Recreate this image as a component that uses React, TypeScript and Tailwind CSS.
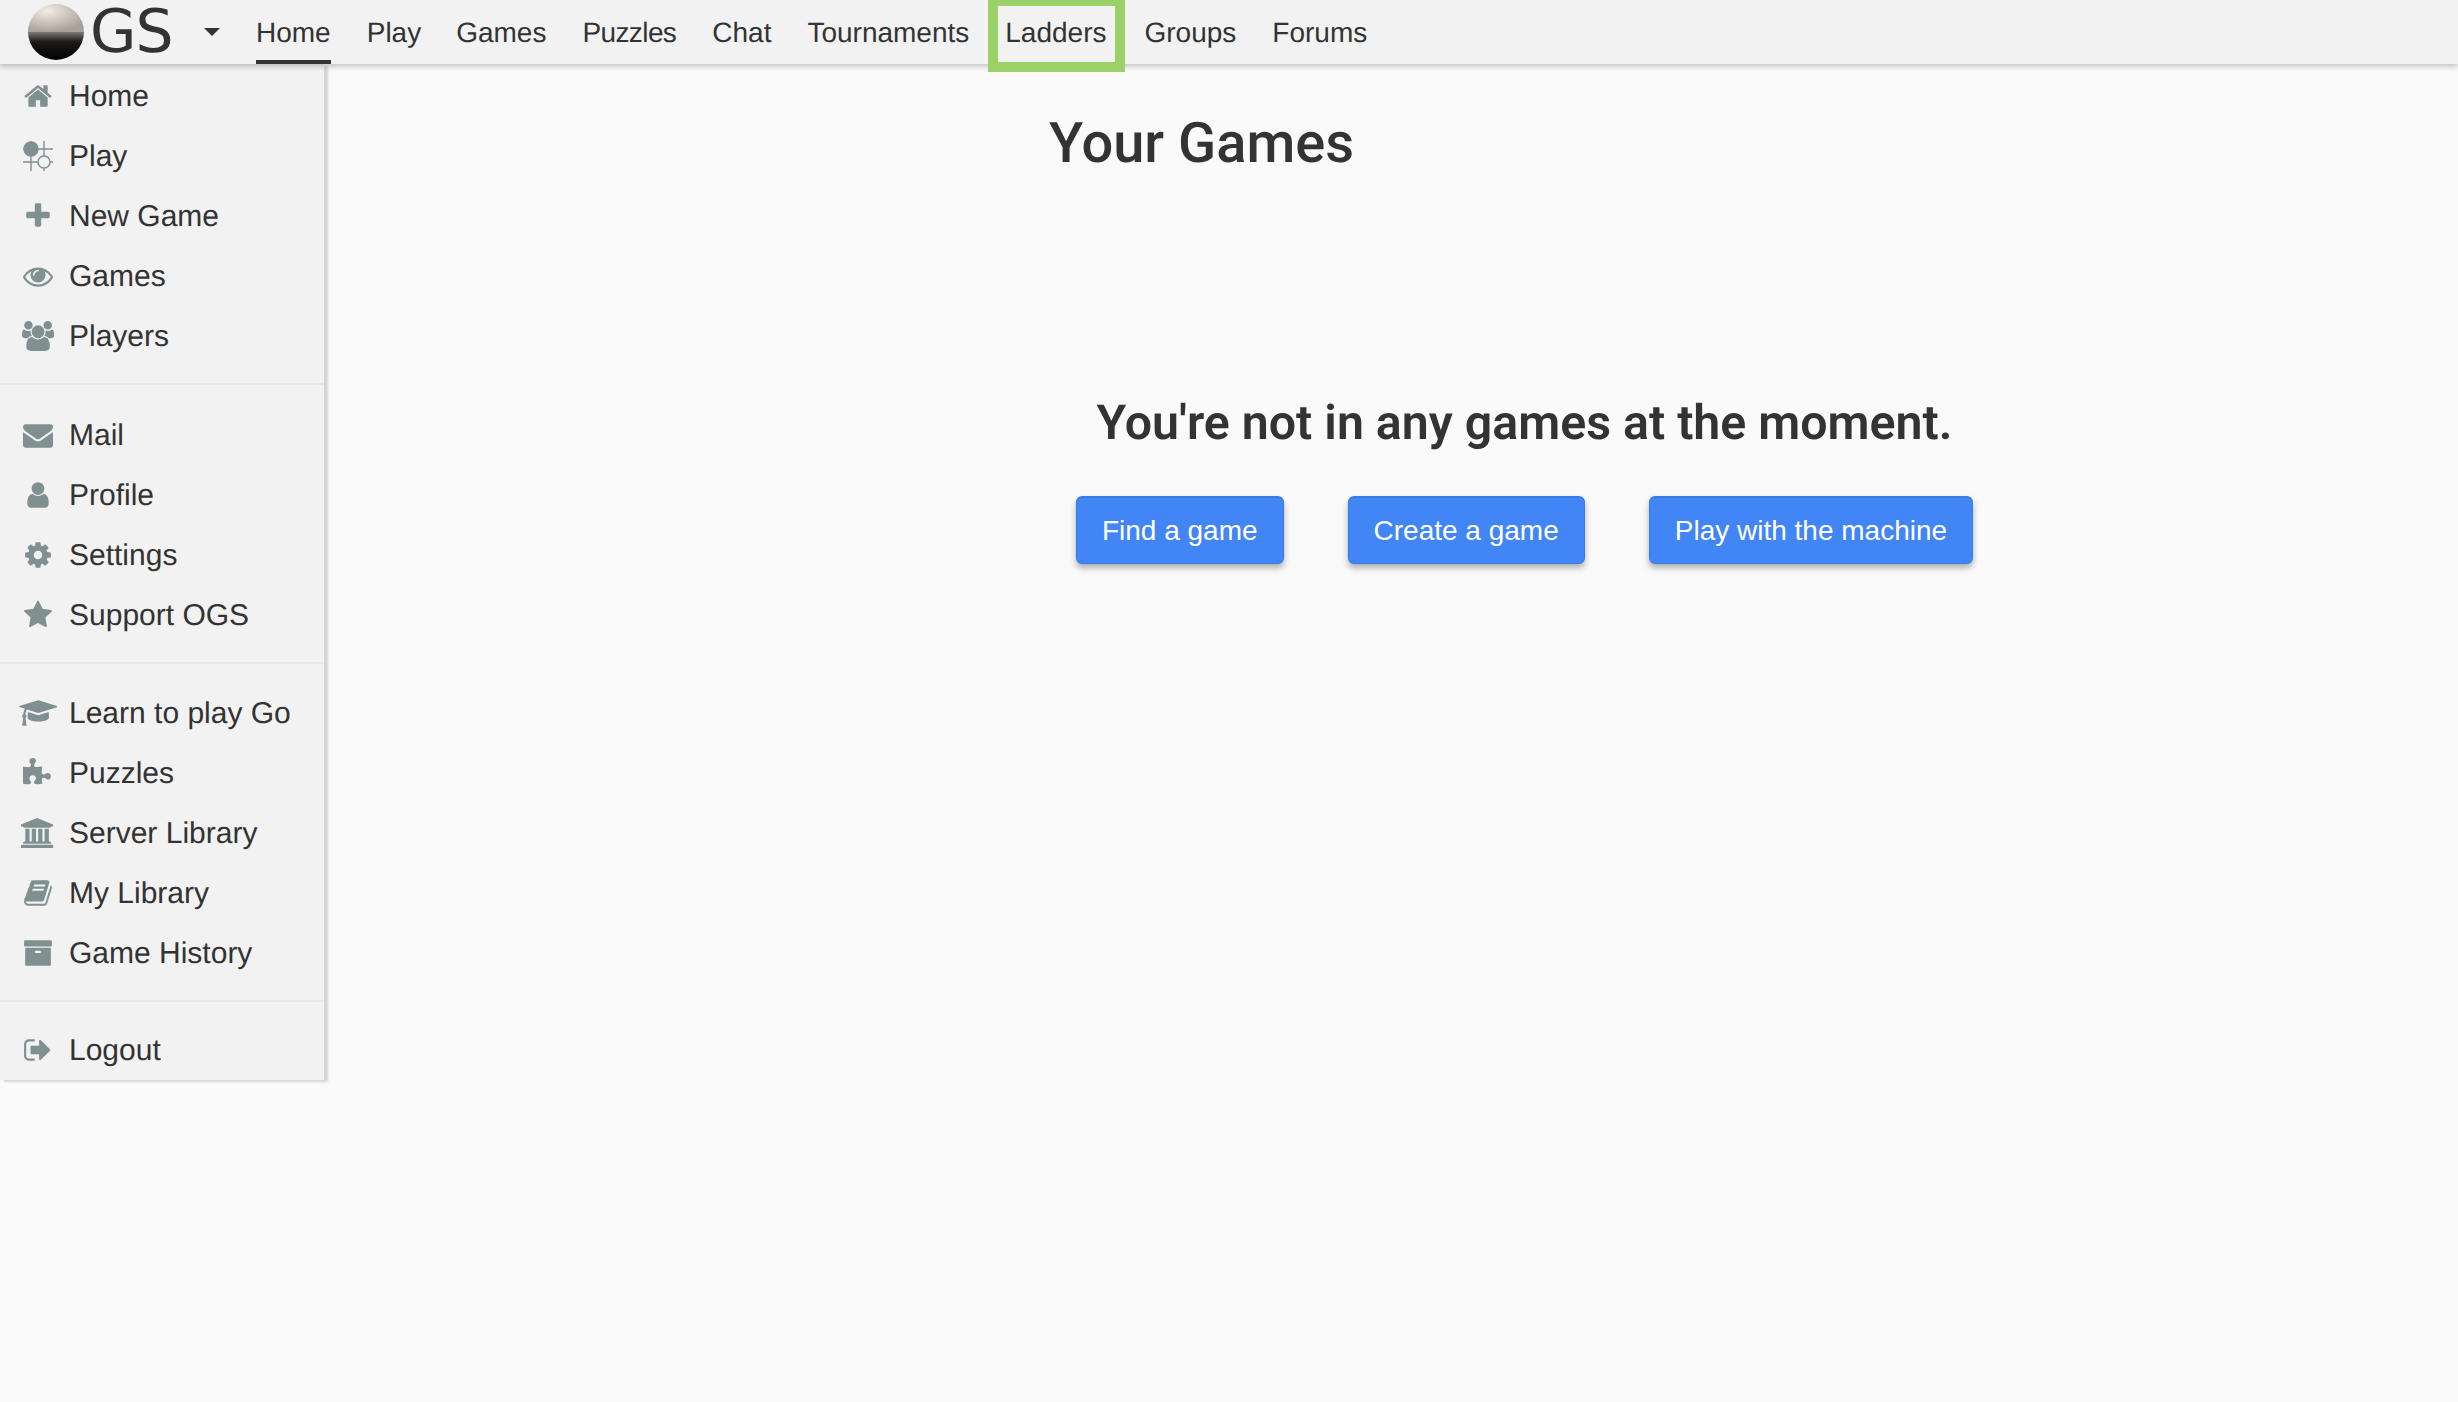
import type { ReactNode } from "react";

// font-awesome 4 glyphs, the 5.x ones in react-icons are too different
const Fa = ({ d, w = 1792, h = 1792 }: { d: string; w?: number; h?: number }) => (
  <svg viewBox={`0 0 ${w} ${h}`} style={{ width: (w * 30) / 1792, height: (h * 30) / 1792 }} fill="currentColor">
    <path d={d} />
  </svg>
);

const GoIcon = () => (
  <svg viewBox="0 0 30 30" className="w-[30px] h-[30px]" fill="none" stroke="currentColor" strokeWidth="1.4">
    <path d="M0 8h30M21 0v15M0 21h30M8 0v30M21 14v16" />
    <circle cx="8" cy="8" r="7" fill="currentColor" />
    <circle cx="21" cy="21" r="6" fill="#f2f2f2" />
  </svg>
);

const Logo = () => (
  <svg viewBox="0 0 56 56" className="w-[56px] h-[56px] shrink-0">
    <defs>
      <radialGradient id="top" cx="35%" cy="25%" r="75%">
        <stop offset="0%" stopColor="#f4ebe2" />
        <stop offset="100%" stopColor="#a9a199" />
      </radialGradient>
      <linearGradient id="bottom" x1="0" y1="0" x2="0" y2="1">
        <stop offset="0%" stopColor="#7d7a76" />
        <stop offset="35%" stopColor="#1c1b1a" />
        <stop offset="100%" stopColor="#000000" />
      </linearGradient>
    </defs>
    <path d="M0 28a28 28 0 0 1 56 0z" fill="url(#top)" />
    <path d="M0 28a28 28 0 0 0 56 0z" fill="url(#bottom)" />
  </svg>
);

type Item = { label: string; icon: ReactNode };

const groups: Item[][] = [
  [
    {
      label: "Home",
      icon: <Fa d="M1472 992v480q0 26-19 45t-45 19h-384v-384h-256v384h-384q-26 0-45-19t-19-45v-480q0-1 .5-3t.5-3l575-474 575 474q1 2 1 6zm223-69l-62 74q-8 9-21 11h-3q-13 0-21-7l-692-577-692 577q-12 8-24 7-13-2-21-11l-62-74q-8-10-7-23.5t11-21.5l719-599q32-26 76-26t76 26l244 204v-195q0-14 9-23t23-9h192q14 0 23 9t9 23v408l219 182q10 8 11 21.5t-7 23.5z" />,
    },
    { label: "Play", icon: <GoIcon /> },
    {
      label: "New Game",
      icon: <Fa d="M1600 736v192q0 40-28 68t-68 28h-416v416q0 40-28 68t-68 28h-192q-40 0-68-28t-28-68v-416h-416q-40 0-68-28t-28-68v-192q0-40 28-68t68-28h416v-416q0-40 28-68t68-28h192q40 0 68 28t28 68v416h416q40 0 68 28t28 68z" />,
    },
    {
      label: "Games",
      icon: <Fa d="M1664 960q-152-236-381-353 61 104 61 225 0 185-131.500 316.500t-316.500 131.500-316.500-131.500-131.500-316.500q0-121 61-225-229 117-381 353 133 205 333.500 326.500t434.500 121.500 434.500-121.500 333.500-326.500zm-720-384q0-20-14-34t-34-14q-125 0-214.500 89.500t-89.500 214.500q0 20 14 34t34 14 34-14 14-34q0-86 61-147t147-61q20 0 34-14t14-34zm848 384q0 34-20 69-140 230-376.500 368.500t-499.500 138.500-499.500-139-376.500-368q-20-35-20-69t20-69q140-229 376.500-368t499.500-139 499.500 139 376.500 368q20 35 20 69z" />,
    },
    {
      label: "Players",
      icon: <Fa w={1920} d="M593 896q-162 5-265 128h-134q-82 0-138-40.500t-56-118.500q0-353 124-353 6 0 43.500 21t97.500 42.500 119 21.500q67 0 133-23-5 37-5 66 0 139 81 256zm1071 637q0 120-73 189.500t-194 69.500h-874q-121 0-194-69.500t-73-189.500q0-53 3.500-103.500t14-109 26.500-108.500 43-97.500 62-81 85.500-53.500 111.500-20q10 0 43 21.500t73 48 107 48 135 21.500 135-21.500 107-48 73-48 43-21.500q61 0 111.500 20t85.500 53.500 62 81 43 97.500 26.500 108.500 14 109 3.500 103.500zm-1024-1277q0 106-75 181t-181 75-181-75-75-181 75-181 181-75 181 75 75 181zm704 384q0 159-112.500 271.500t-271.500 112.500-271.500-112.500-112.500-271.500 112.500-271.500 271.500-112.500 271.500 112.500 112.500 271.500zm576 225q0 78-56 118.500t-138 40.500h-134q-103-123-265-128 81-117 81-256 0-29-5-66 66 23 133 23 59 0 119-21.500t97.500-42.500 43.500-21q124 0 124 353zm-128-609q0 106-75 181t-181 75-181-75-75-181 75-181 181-75 181 75 75 181z" />,
    },
  ],
  [
    {
      label: "Mail",
      icon: <Fa d="M1792 710v794q0 66-47 113t-113 47h-1472q-66 0-113-47t-47-113v-794q44 49 101 87 362 246 497 345 57 42 92.500 65.500t94.500 48 110 24.500h2q51 0 110-24.500t94.500-48 92.500-65.500q170-123 498-345 57-39 100-87zm0-294q0 79-49 151t-122 123q-376 261-468 325-10 7-42.500 30.500t-54 38-52 32.500-57.500 27-50 9h-2q-23 0-50-9t-57.500-27-52-32.500-54-38-42.500-30.500q-91-64-262-182.500t-205-142.500q-62-42-117-115.500t-55-136.500q0-78 41.500-130t118.500-52h1472q65 0 112.500 47t47.500 113z" />,
    },
    {
      label: "Profile",
      icon: <Fa d="M1536 1399q0 109-62.500 187t-150.500 78h-854q-88 0-150.500-78t-62.500-187q0-85 8.500-160.500t31.500-152 58.500-131 94-89 134.500-34.500q131 128 313 128t313-128q76 0 134.500 34.500t94 89 58.500 131 31.500 152 8.500 160.500zm-256-887q0 159-112.500 271.500t-271.500 112.500-271.500-112.500-112.500-271.500 112.500-271.500 271.500-112.500 271.500 112.500 112.500 271.500z" />,
    },
    {
      label: "Settings",
      icon: <Fa d="M1152 896q0-106-75-181t-181-75-181 75-75 181 75 181 181 75 181-75 75-181zm512-109v222q0 12-8 23t-20 13l-185 28q-19 54-39 91 35 50 107 138 10 12 10 25t-9 23q-27 37-99 108t-94 71q-12 0-26-9l-138-108q-44 23-91 38-16 136-29 186-7 28-36 28h-222q-14 0-24.500-8.500t-11.500-21.500l-28-184q-49-16-90-37l-141 107q-10 9-25 9-14 0-25-11-126-114-165-168-7-10-7-23 0-12 8-23 15-21 51-66.500t54-70.500q-27-50-41-99l-183-27q-13-2-21-12.500t-8-23.500v-222q0-12 8-23t19-13l186-28q14-46 39-92-40-57-107-138-10-12-10-24 0-10 9-23 26-36 98.500-107.500t94.500-71.500q13 0 26 10l138 107q44-23 91-38 16-136 29-186 7-28 36-28h222q14 0 24.500 8.500t11.500 21.500l28 184q49 16 90 37l142-107q9-9 24-9 13 0 25 10 129 119 165 170 7 8 7 22 0 12-8 23-15 21-51 66.500t-54 70.500q26 50 41 98l183 28q13 2 21 12.500t8 23.500z" />,
    },
    {
      label: "Support OGS",
      icon: <Fa d="M1728 647q0 22-26 48l-363 354 86 500q1 7 1 20 0 21-10.500 35.500t-30.500 14.500q-19 0-40-12l-449-236-449 236q-22 12-40 12-21 0-31.500-14.500t-10.500-35.500q0-6 2-20l86-500-364-354q-25-27-25-48 0-37 56-46l502-73 225-455q19-41 49-41t49 41l225 455 502 73q56 9 56 46z" />,
    },
  ],
  [
    {
      label: "Learn to play Go",
      icon: <Fa w={2304} d="M1774 836l18 316q4 69-82 128t-235 93.500-323 34.500-323-34.500-235-93.500-82-128l18-316 574 181q22 7 48 7t48-7zm530-324q0 23-22 31l-1120 352q-4 1-10 1t-10-1l-652-206q-43 34-71 111.500t-34 178.500q63 36 63 109 0 69-58 107l58 433q2 14-8 25-9 11-24 11h-192q-15 0-24-11-10-11-8-25l58-433q-58-38-58-107 0-73 65-111 11-207 98-330l-333-104q-22-8-22-31t22-31l1120-352q4-1 10-1t10 1l1120 352q22 8 22 31z" />,
    },
    {
      label: "Puzzles",
      icon: <Fa d="M1664 1098q0 81-44.500 135t-123.500 54q-41 0-77.500-17.500t-59-38-56.500-38-71-17.500q-110 0-110 124 0 39 16 115t15 115v5q-22 0-33 1-34 3-97.500 11.500t-115.500 13.500-98 5q-61 0-103-26.500t-42-83.500q0-37 17.500-71t38-56.500 38-59 17.500-77.500q0-79-54-123.500t-135-44.500q-84 0-143 45.500t-59 127.500q0 43 15 83t33.500 64.500 33.500 53 15 50.500q0 45-46 89-37 35-117 35-95 0-245-24-9-2-27.500-4t-27.500-4l-13-2q-2 0-4-1-2 0-2-1v-1024q2 1 17.500 3.500t34 5 21.500 3.500q150 24 245 24 80 0 117-35 46-44 46-89 0-22-15-50.500t-33.500-53-33.500-64.500-15-83q0-82 59-127.500t144-45.500q80 0 134 44.500t54 123.500q0 41-17.500 77.500t-38 59-38 56.500-17.500 71q0 57 42 83.500t103 26.500q64 0 180-15t163-17v2q-1 2-3.500 17.500t-5 34-3.500 21.500q-24 150-24 245 0 80 35 117 44 46 89 46 22 0 50.500-15t53-33.500 64.500-33.500 83-15q82 0 127.500 59t45.500 143z" />,
    },
    {
      label: "Server Library",
      icon: <Fa w={2048} d="M960 0l960 384v128h-128q0 26-20.500 45t-48.500 19h-1526q-28 0-48.500-19t-20.500-45h-128v-128zm-704 640h256v768h128v-768h256v768h128v-768h256v768h128v-768h256v768h59q28 0 48.500 19t20.500 45v64h-1664v-64q0-26 20.500-45t48.500-19h59v-768zm1595 960q28 0 48.500 19t20.500 45v128h-1920v-128q0-26 20.500-45t48.500-19h1782z" />,
    },
    {
      label: "My Library",
      icon: <Fa d="M1703 478q40 57 18 129l-275 906q-19 64-76.500 107.500t-122.500 43.500h-923q-77 0-148.500-53.500t-99.500-131.500q-24-67-2-127 0-4 3-27t4-37q1-8-3-21.500t-3-19.500q2-11 8-21t16.500-23.500 16.500-23.500q23-38 45-91.500t30-91.500q3-10 .5-30t-.5-28q3-11 17-28t17-23q21-36 42-92t25-90q1-9-2.500-32t.5-28q4-13 22-30.500t22-22.500q19-26 42.500-84.500t27.500-96.500q1-8-3-25.500t-2-26.500q2-8 9-18t18-23 17-21q8-12 16.500-30.500t15-35 16-36 19.500-32 26.500-23.500 36-11.500 47.500 5.500l-1 3q38-9 51-9h761q74 0 114 56t18 130l-274 906q-36 119-71.500 153.500t-128.500 34.500h-869q-27 0-38 15-11 16-1 43 24 70 144 70h923q29 0 56-15.500t35-41.500l300-987q7-22 5-57 38 15 59 43zm-1064 2q-4 13 2 22.500t20 9.500h608q13 0 25.500-9.500t16.500-22.500l21-64q4-13-2-22.500t-20-9.500h-608q-13 0-25.500 9.500t-16.500 22.500zm-83 256q-4 13 2 22.500t20 9.500h608q13 0 25.500-9.500t16.500-22.500l21-64q4-13-2-22.500t-20-9.500h-608q-13 0-25.500 9.500t-16.500 22.500z" />,
    },
    {
      label: "Game History",
      icon: <Fa d="M1088 832q0-26-19-45t-45-19h-256q-26 0-45 19t-19 45 19 45 45 19h256q26 0 45-19t19-45zm576-192v960q0 26-19 45t-45 19h-1408q-26 0-45-19t-19-45v-960q0-26 19-45t45-19h1408q26 0 45 19t19 45zm64-448v256q0 26-19 45t-45 19h-1536q-26 0-45-19t-19-45v-256q0-26 19-45t45-19h1536q26 0 45 19t19 45z" />,
    },
  ],
  [
    {
      label: "Logout",
      icon: <Fa d="M704 1440q0 4 1 20t.5 26.500-3 23.500-10 19.500-20.500 6.500h-320q-119 0-203.500-84.500t-84.500-203.500v-704q0-119 84.500-203.500t203.500-84.500h320q13 0 22.500 9.500t9.500 22.500q0 4 1 20t.5 26.500-3 23.500-10 19.500-20.500 6.500h-320q-66 0-113 47t-47 113v704q0 66 47 113t113 47h312l11.500 1 11.500 3 8 5.500 7 9 2 13.500zm928-544q0 26-19 45l-544 544q-19 19-45 19t-45-19-19-45v-288h-448q-26 0-45-19t-19-45v-384q0-26 19-45t45-19h448v-288q0-26 19-45t45-19 45 19l544 544q19 19 19 45z" />,
    },
  ],
];

const groupGaps = ["mb-[20px]", "mb-[19px]", "mb-[18px]", ""];

const navLinks = [
  { label: "Play" },
  { label: "Games", className: "ml-[-1px]" },
  { label: "Puzzles", className: "tracking-[-0.6px]" },
  { label: "Chat" },
  { label: "Tournaments" },
  { label: "Ladders", className: "mr-[2px]" },
  { label: "Groups" },
  { label: "Forums" },
];

const Sidebar = () => (
  <aside className="w-[324px] h-[1016px] shrink-0 bg-[#f2f2f2] pt-[2px] shadow-[4px_2px_2px_rgba(0,0,0,0.15)]">
    {groups.map((group, i) => (
      <div
        key={i}
        className={`${groupGaps[i]} ${i < groups.length - 1 ? "pb-[17px] border-b-2 border-[#e8e8e8]" : ""}`}
      >
        {group.map((item) => (
          <div key={item.label} className="flex items-center h-[60px] text-[30px] text-[#333]">
            <span className="flex items-center justify-center w-[76px] text-[#809090]">{item.icon}</span>
            <span className="ml-[-7px]">{item.label}</span>
          </div>
        ))}
      </div>
    ))}
  </aside>
);

export default function App() {
  return (
    <div className="min-h-screen bg-[#fafafa] font-['Liberation_Sans',Arial,sans-serif] text-[#333] [text-rendering:geometricPrecision]">
      <header className="relative z-10 flex items-stretch h-[64px] bg-[#f2f2f2] shadow-[0_3px_5px_rgba(0,0,0,0.2)]">
        <div className="flex items-center w-[256px] pl-[28px] text-[#333]">
          <Logo />
          <span className="ml-[6px] text-[60px] leading-none font-['DejaVu_Sans',sans-serif] tracking-[-1px] text-[#333]">
            GS
          </span>
          <span className="ml-[31px] w-0 h-0 border-x-[8px] border-x-transparent border-t-[8px] border-t-[#333]" />
        </div>
        <nav className="flex gap-[36px] text-[28px]">
          <a className="flex items-center pt-[5px] border-b-4 border-[#333]">Home</a>
          {navLinks.map((link) => (
            <a key={link.label} className={`relative flex items-center pt-[1px] ${link.className ?? ""}`}>
              {link.label}
              {link.label === "Ladders" && (
                <span className="absolute left-[-17px] right-[-19px] top-[-4px] h-[76px] border-[10px] border-[#9ad268]" />
              )}
            </a>
          ))}
        </nav>
      </header>
      <div className="flex items-start">
        <Sidebar />
        <main className="ml-[725px] w-[951px]">
          <h1 className="mt-[46px] ml-0 text-[56px] leading-[66px] font-medium font-['Roboto',sans-serif]">
            Your Games
          </h1>
          <h2 className="mt-[219px] text-center text-[48.3px] leading-[56px] font-semibold font-['Roboto',sans-serif]">
            You're not in any games at the moment.
          </h2>
          <div className="mt-[45px] flex justify-center gap-[64px]">
            {["Find a game", "Create a game", "Play with the machine"].map((label) => (
              <button
                key={label}
                className="h-[68px] px-[25px] rounded-[6px] bg-[#4285f4] border border-t-2 border-[#3b7be8] text-white text-[28px] shadow-[0_4px_6px_rgba(0,0,0,0.3)]"
              >
                {label}
              </button>
            ))}
          </div>
        </main>
      </div>
    </div>
  );
}
